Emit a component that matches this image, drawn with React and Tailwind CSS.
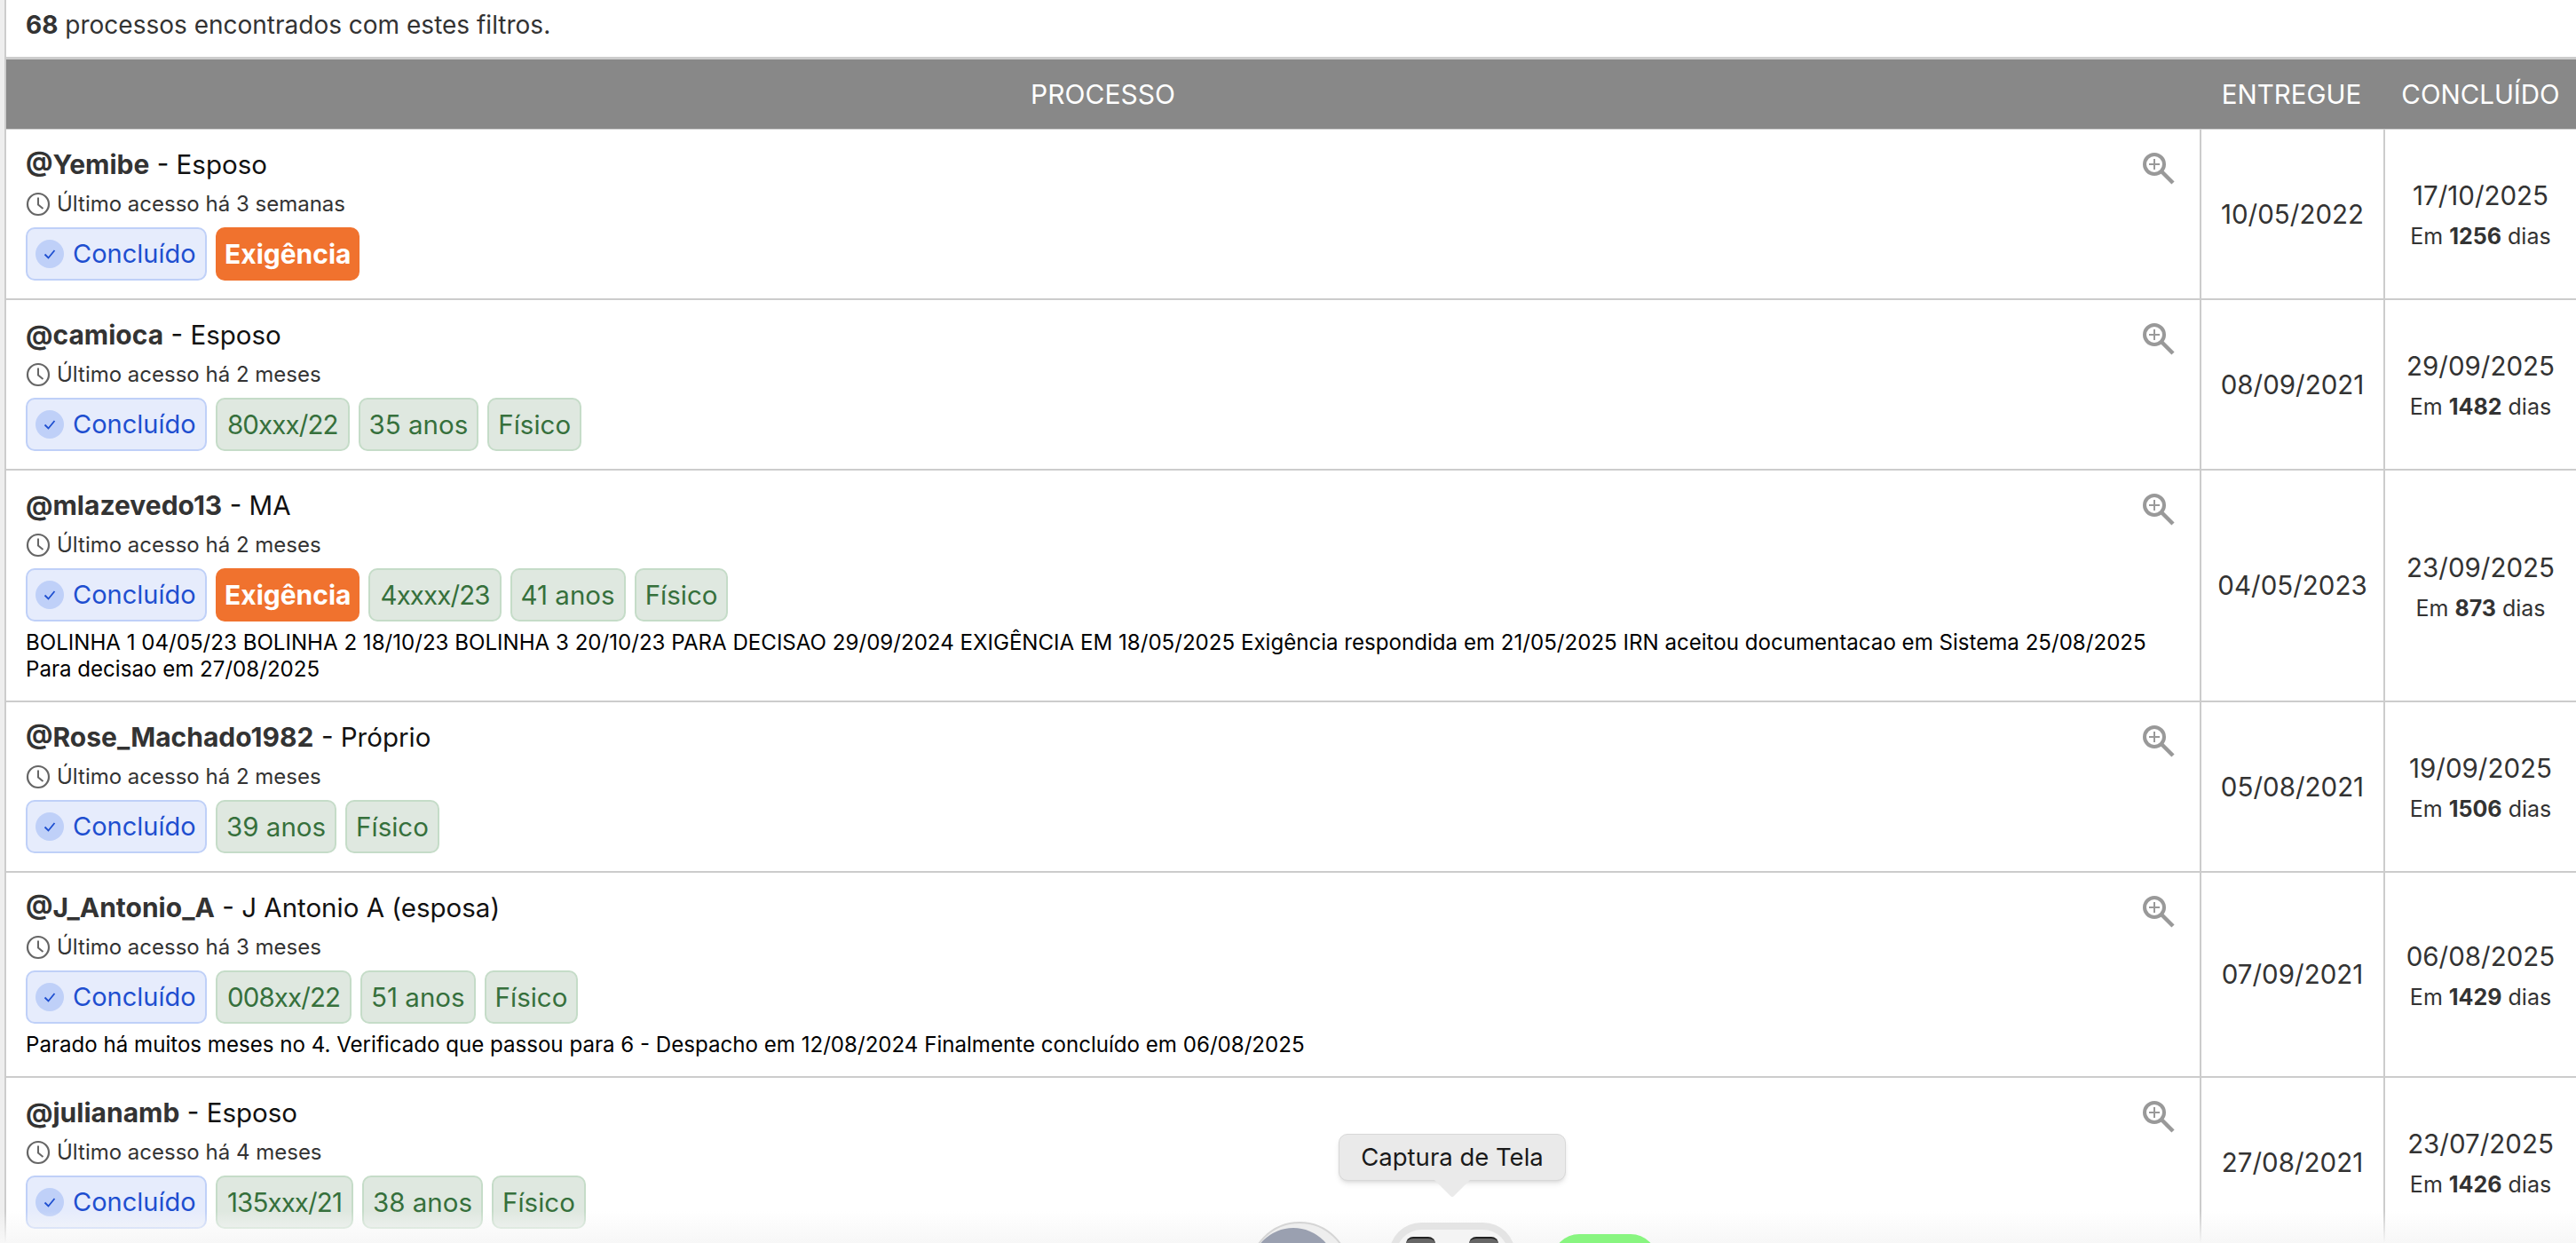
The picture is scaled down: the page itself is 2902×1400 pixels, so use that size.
import React from "react";

const font = { fontFamily: "Inter, sans-serif" };

const rows = [
  { user: "@Yemibe", who: "Esposo", seen: "3 semanas", tags: ["Exigência"], start: "10/05/2022", end: "17/10/2025", days: "1256" },
  { user: "@camioca", who: "Esposo", seen: "2 meses", tags: ["80xxx/22", "35 anos", "Físico"], start: "08/09/2021", end: "29/09/2025", days: "1482" },
  {
    user: "@mlazevedo13",
    who: "MA",
    seen: "2 meses",
    tags: ["Exigência", "4xxxx/23", "41 anos", "Físico"],
    note: "BOLINHA 1 04/05/23 BOLINHA 2 18/10/23 BOLINHA 3 20/10/23 PARA DECISAO 29/09/2024 EXIGÊNCIA EM 18/05/2025 Exigência respondida em 21/05/2025 IRN aceitou documentacao em Sistema 25/08/2025 Para decisao em 27/08/2025",
    start: "04/05/2023",
    end: "23/09/2025",
    days: "873",
  },
  { user: "@Rose_Machado1982", who: "Próprio", seen: "2 meses", tags: ["39 anos", "Físico"], start: "05/08/2021", end: "19/09/2025", days: "1506" },
  {
    user: "@J_Antonio_A",
    who: "J Antonio A (esposa)",
    seen: "3 meses",
    tags: ["008xx/22", "51 anos", "Físico"],
    note: "Parado há muitos meses no 4. Verificado que passou para 6 - Despacho em 12/08/2024 Finalmente concluído em 06/08/2025",
    start: "07/09/2021",
    end: "06/08/2025",
    days: "1429",
  },
  { user: "@julianamb", who: "Esposo", seen: "4 meses", tags: ["135xxx/21", "38 anos", "Físico"], start: "27/08/2021", end: "23/07/2025", days: "1426" },
];

const ZoomIcon = () => (
  <svg width="36" height="36" viewBox="0 0 36 36" fill="none" className="shrink-0">
    <circle cx="13" cy="13" r="11" stroke="#999" strokeWidth="4" />
    <path d="M21 21 L34 34" stroke="#999" strokeWidth="4.5" />
    <path d="M13 7 V19 M7 13 H19" stroke="#999" strokeWidth="2" />
  </svg>
);

const ClockIcon = () => (
  <svg width="28" height="28" viewBox="0 0 28 28" fill="none" className="shrink-0">
    <circle cx="14" cy="14" r="12" stroke="#666" strokeWidth="2.2" />
    <path d="M14 6.5 V14.5 L19.5 19" stroke="#666" strokeWidth="2" />
  </svg>
);

const StatusBadge = () => (
  <span className="flex h-[60px] w-[204px] items-center rounded-[10px] border-2 border-[#bfd0f8] bg-[#e6ecfc] pl-[9px] text-[29px] text-[#1e4fd0]">
    <span className="mr-[10px] flex h-[32px] w-[32px] items-center justify-center rounded-full bg-[#bfd0f8]">
      <svg width="16" height="16" viewBox="0 0 16 16" fill="none">
        <path d="M2.5 8.5 L6.5 12.5 L13.5 4" stroke="#1e4fd0" strokeWidth="1.8" />
      </svg>
    </span>
    Concluído
  </span>
);

const Tag = ({ label }) => {
  if (label === "Exigência") {
    return <span className="flex h-[60px] items-center rounded-[10px] bg-[#f0722e] px-[10px] text-[30px] font-bold text-white">{label}</span>;
  }
  // the codes are set tighter than the other tags
  const isCode = label.includes("xx");
  return (
    <span className={`flex h-[60px] items-center rounded-[10px] border-2 border-[#c5dcc8] bg-[#dfe8e0] text-[29.5px] text-[#36703c] ${isCode ? "px-[11px] tracking-[-0.9px]" : "px-[10px]"}`}>
      {label}
    </span>
  );
};

const Row = ({ row }) => (
  <div className="flex border-b-2 border-[#cccccc]">
    <div className="min-w-0 flex-1 pb-[20px] pl-[22px] pr-[28px] pt-[16px]">
      <div className="flex items-start justify-between">
        <div className="h-[46px] text-[30px] leading-[46px] text-[#111]">
          <b className="font-bold text-[#333]">{row.user}</b> <span className="text-[29.5px]">- {row.who}</span>
        </div>
        <div className="pt-[10px]"><ZoomIcon /></div>
      </div>
      <div className="mb-[4px] flex h-[44px] items-center gap-[7px] text-[24px] text-[#333]">
        <ClockIcon />
        Último acesso há {row.seen}
      </div>
      <div className="flex gap-[10px]">
        <StatusBadge />
        {row.tags.map((t) => (
          <Tag key={t} label={t} />
        ))}
      </div>
      {row.note && <p className="mt-[9px] text-[24.1px] leading-[30px] text-black">{row.note}</p>}
    </div>
    <div className="flex w-[207px] shrink-0 items-center justify-center border-l-2 border-[#cccccc] text-[29.5px] text-[#333]">{row.start}</div>
    <div className="flex w-[217px] shrink-0 flex-col items-center justify-center border-l-2 border-[#cccccc] pt-[4px] text-[#333]">
      <div className="text-[29.5px] leading-[46px]">{row.end}</div>
      <div className="text-[25px] leading-[46px]">
        Em <b className="font-bold">{row.days}</b> dias
      </div>
    </div>
  </div>
);

const Dock = () => (
  <div className="pointer-events-none absolute bottom-0 left-0 right-0 h-[130px]">
    <div className="absolute bottom-0 left-0 right-0 h-[36px] bg-gradient-to-b from-transparent to-[#f7f7f7]" />
    <div className="absolute left-[1508px] top-[7px] flex h-[53px] w-[256px] items-center justify-center rounded-[10px] border border-[#d8d8d8] bg-[#eaeaea] text-[27.5px] text-[#1a1a1a] shadow-md">
      Captura de Tela
    </div>
    <svg className="absolute left-[1616px] top-[59px]" width="40" height="20" viewBox="0 0 40 20">
      <path d="M0 0 H40 L22 18 Q20 20 18 18 Z" fill="#eaeaea" />
    </svg>
    <div className="absolute left-[1407px] top-[106px] h-[114px] w-[114px] overflow-hidden rounded-full border-2 border-[#d5d5d5] bg-[#eeeeee]">
      <div className="mt-[5px] h-[110px] w-[96px] rounded-full bg-[#9aa0b0]" />
    </div>
    <div className="absolute left-[1565px] top-[107px] h-[120px] w-[142px] rounded-[36px] bg-[#e4e4e4] px-[8px] pt-[8px]">
      <div className="flex h-full justify-between rounded-[28px] bg-[#f4f4f4] px-[11px] pt-[8px]">
        <div className="h-[40px] w-[33px] rounded-[8px] border-t-2 border-[#222] bg-[#666]" />
        <div className="h-[40px] w-[33px] rounded-[8px] border-t-2 border-[#222] bg-[#666]" />
      </div>
    </div>
    <div className="absolute left-[1749px] top-[120px] h-[100px] w-[118px] rounded-[30px] bg-[#88f580]" />
  </div>
);

export default function App() {
  return (
    <div style={font} className="relative h-[1400px] w-[2902px] overflow-hidden bg-white">
      <div className="ml-[5px] border-l-2 border-[#cccccc] before:absolute before:inset-y-0 before:left-0 before:w-[5px] before:bg-[#eeeeee]">
        <div className="flex h-[64px] items-center pb-[8px] pl-[22px] text-[28px] text-[#333]">
          <span><b className="font-bold">68</b> processos encontrados com estes filtros.</span>
        </div>
        <div className="flex h-[82px] border-t-[3px] border-b-[1px] border-t-[#cccccc] border-b-[#cccccc] bg-[#888888] text-[29.5px] text-white">
          <div className="flex flex-1 items-center justify-center text-[30px]">PROCESSO</div>
          <div className="flex w-[207px] shrink-0 items-center justify-center">ENTREGUE</div>
          <div className="flex w-[217px] shrink-0 items-center justify-center pl-[2px]">CONCLUÍDO</div>
        </div>
        {rows.map((row) => (
          <Row key={row.user} row={row} />
        ))}
      </div>
      <Dock />
    </div>
  );
}
